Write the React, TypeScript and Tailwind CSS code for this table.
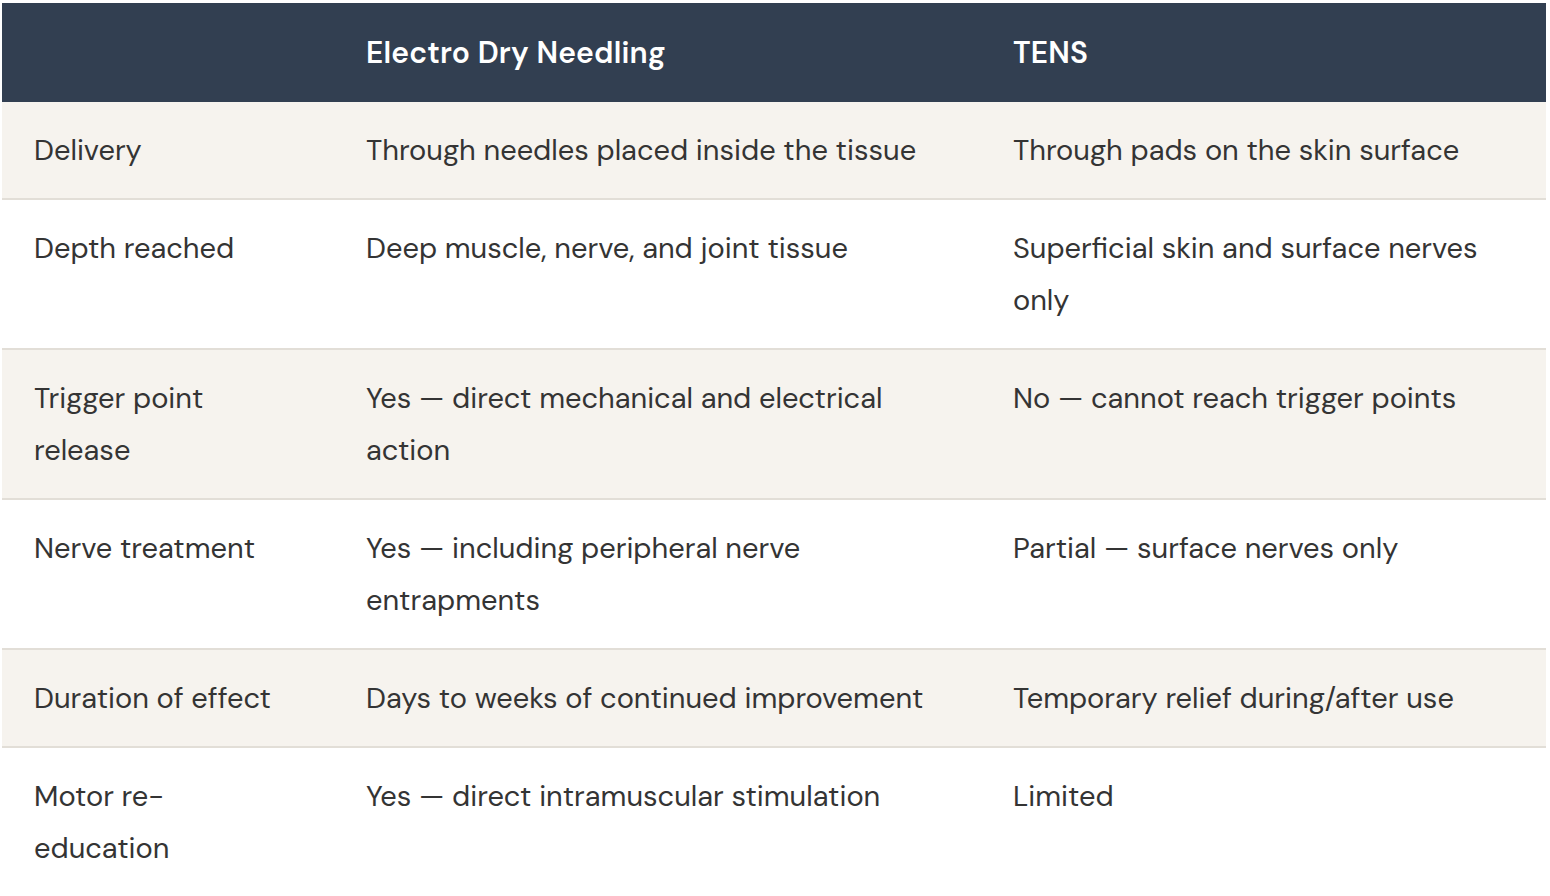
const rows = [
  ['Delivery', 'Through needles placed inside the tissue', 'Through pads on the skin surface'],
  ['Depth reached', 'Deep muscle, nerve, and joint tissue', 'Superficial skin and surface nerves only'],
  ['Trigger point release', 'Yes — direct mechanical and electrical action', 'No — cannot reach trigger points'],
  ['Nerve treatment', 'Yes — including peripheral nerve entrapments', 'Partial — surface nerves only'],
  ['Duration of effect', 'Days to weeks of continued improvement', 'Temporary relief during/after use'],
  ['Motor re-education', 'Yes — direct intramuscular stimulation', 'Limited'],
]

export default function App() {
  return (
    <div className="bg-white min-h-screen pt-[3px] pl-[2px] pr-[4px]">
      <table
        className="w-[1544px] table-fixed border-collapse text-left text-[29px] leading-[52px] text-[#343434]"
        style={{ fontFamily: '"DM Sans", Inter, "Noto Sans", sans-serif' }}
      >
        <colgroup>
          <col className="w-[332px]" />
          <col className="w-[647px]" />
          <col className="w-[565px]" />
        </colgroup>
        <thead>
          <tr className="bg-[#323f51] text-white text-[30px] tracking-[0.2px]">
            <th className="px-8 pt-[24px] pb-[23px] font-semibold"></th>
            <th className="px-8 pt-[24px] pb-[23px] font-semibold">Electro Dry Needling</th>
            <th className="px-8 pt-[24px] pb-[23px] font-semibold">TENS</th>
          </tr>
        </thead>
        <tbody>
          {rows.map((r, i) => (
            <tr
              key={r[0]}
              className={(i % 2 === 0 ? 'bg-[#f6f3ee]' : 'bg-white') + ' border-b-2 border-[#e2ded7]'}
            >
              <td className="px-8 pt-[22px] pb-[22px] align-top">
                <div className="max-w-[250px]">{r[0]}</div>
              </td>
              <td className="px-8 pt-[22px] pb-[22px] align-top">{r[1]}</td>
              <td className="px-8 pt-[22px] pb-[22px] align-top">{r[2]}</td>
            </tr>
          ))}
        </tbody>
      </table>
    </div>
  )
}
